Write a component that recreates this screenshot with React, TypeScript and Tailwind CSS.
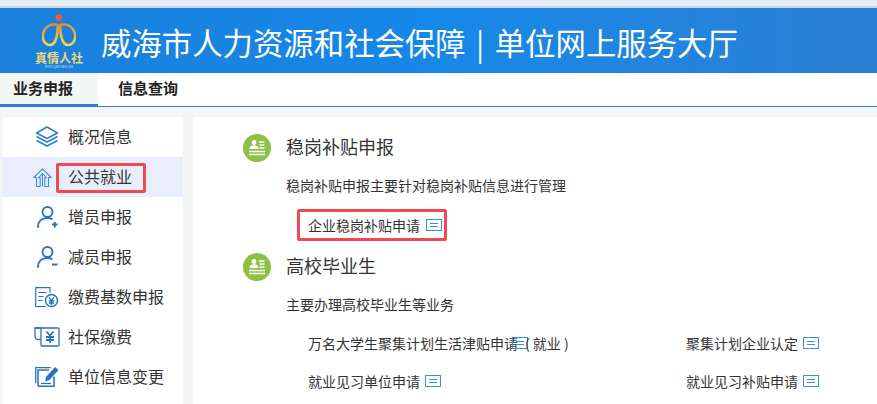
const font = { fontFamily: '"Noto Sans CJK SC", "Liberation Sans", sans-serif' };

function ListIcon() {
  return (
    <svg width="16" height="12" viewBox="0 0 16 12" fill="none" stroke="#3f8fd2" strokeWidth="1" className="shrink-0">
      <rect x="0.5" y="0.5" width="15" height="11" />
      <path d="M4 4.500h8M4 7.500h8" />
    </svg>
  );
}

function GreenBadge() {
  return (
    <svg width="28" height="28" viewBox="0 0 28 28" className="shrink-0">
      <circle cx="14" cy="14" r="14" fill="#8dc045" />
      <circle cx="11" cy="8.500" r="2.400" fill="#fff" />
      <path d="M6.500 15c0-2.800 1.800-3.800 4.500-3.800s4.500 1 4.500 3.800z" fill="#fff" />
      <path d="M16 8h5.500M16.500 11h5M16.500 14h5M6 17.500h16M6 20.500h16" stroke="#fff" strokeWidth="1.500" />
    </svg>
  );
}

function Layers() {
  return (
    <svg width="24" height="21" viewBox="0 0 24 21" fill="none" stroke="#2f80c8" strokeWidth="1.700" strokeLinejoin="round" className="mr-[1px] -mt-[1px]">
      <path d="M12 1 22.500 7 12 12.500 1.500 7z" />
      <path d="M1.500 10.500 12 16l10.500-5.500" />
      <path d="M1.500 14.500 12 20l10.500-5.500" />
    </svg>
  );
}

function House() {
  return (
    <svg width="19" height="19" viewBox="0 0 19 19" fill="none" stroke="#3f8fd2" strokeWidth="1.100" strokeLinejoin="round" className="mr-[10px]">
      <path d="M3.500 18.500V9.500H.8L9.500.8l8.700 8.700h-2.700v9h-3.700V9.800h1.700L9.500 5.500 5.500 9.800h1.700v8.700z" />
      <path d="M9.500 5.500v13" />
    </svg>
  );
}

function Person({ plus }: { plus: boolean }) {
  return (
    <svg width="21" height="22" viewBox="0 0 21 22" fill="none" stroke="#2773bd" strokeWidth="1.900" strokeLinecap="round">
      <circle cx="10.500" cy="6" r="5" />
      <path d="M1 21c0-5.500 3.500-9 9.500-9 1.500 0 3 .3 4.200.9" />
      <path d="M15 18.500h5.500" strokeWidth="2" strokeLinecap="butt" />
      {plus ? <path d="M17.800 16v5.500" strokeWidth="2" strokeLinecap="butt" /> : null}
    </svg>
  );
}

function Fee() {
  return (
    <svg width="24" height="21" viewBox="0 0 24 21" fill="none" stroke="#2773bd" strokeWidth="1.200">
      <path d="M11 19.500H.7V.7H15v5" />
      <path d="M3.500 5.500h8M3.500 9.500h5M3.500 13.500h4" />
      <circle cx="16.500" cy="13.500" r="6" strokeWidth="1.500" />
      <path d="M14 10.500l2.500 3.200 2.500-3.200M13.800 14h5.400M13.800 16h5.400M16.500 13.500v4.500" strokeWidth="1.300" />
    </svg>
  );
}

function Pay() {
  return (
    <svg width="26" height="20" viewBox="0 0 26 20" fill="none" stroke="#2773bd" strokeWidth="1.300">
      <path d="M7 12.500H3.500C2 12.500 1 11 1 9V1h6" />
      <path d="M1 1h23c.7 0 1 .4 1 1v16c0 .6-.3 1-1 1H8c-.7 0-1-.4-1-1V1" />
      <path d="M12.500 4.500l3.500 4 3.500-4M12 10h8M12 13h8M16 8.500v7.500" strokeWidth="1.800" />
    </svg>
  );
}

function Edit() {
  return (
    <svg width="24" height="20" viewBox="0 0 24 20" fill="none" stroke="#2773bd" strokeWidth="1.300">
      <path d="M.7 16V.7h15" />
      <path d="M3 19.300V3h11M19 9.500v9.800H3" strokeWidth="1.500" />
      <path d="M20 0l3.500 3-9 10-4.500 1.500 1-4.500z" fill="#2773bd" stroke="none" />
      <path d="M6 16.500h10" strokeWidth="1.200" />
    </svg>
  );
}

function Logo() {
  const leaf = 'M15.500 11C8 8 .5 15 .8 23c.2 5 4 8.500 8 8 5-1 7.500-11 6.700-20z';
  return (
    <div className="flex flex-col items-center w-[50px] ml-[34px] pt-[6px]">
      <svg width="34" height="34" viewBox="0 0 34 34" fill="none" className="shrink-0">
        <defs>
          <linearGradient id="g" gradientUnits="userSpaceOnUse" x1="0" y1="8" x2="0" y2="32">
            <stop offset="0" stopColor="#e5862c" />
            <stop offset="1" stopColor="#f6dd48" />
          </linearGradient>
        </defs>
        <circle cx="16.800" cy="3.500" r="3.300" fill="#ee5b2c" />
        <path d={leaf} stroke="url(#g)" strokeWidth="2.600" />
        <path d={leaf} stroke="url(#g)" strokeWidth="2.600" transform="matrix(-1 0 0 1 34 0)" />
      </svg>
      <span className="text-[12px] leading-[14px] font-bold text-[#f2d873] mt-[3px] whitespace-nowrap">真情人社</span>
      <span className="text-[3px] leading-[5px] text-[#d9e6c0] whitespace-nowrap">ZHEN QING REN SHE</span>
    </div>
  );
}

const menu = [
  { label: '概况信息', icon: <Layers /> },
  { label: '公共就业', icon: <House />, active: true },
  { label: '增员申报', icon: <Person plus /> },
  { label: '减员申报', icon: <Person plus={false} /> },
  { label: '缴费基数申报', icon: <Fee /> },
  { label: '社保缴费', icon: <Pay /> },
  { label: '单位信息变更', icon: <Edit /> },
];

function Section({ title, desc, children }: { title: string; desc: string; children: React.ReactNode }) {
  return (
    <section>
      <div className="flex items-center h-[28px] ml-[50px]">
        <GreenBadge />
        <h2 className="ml-[15px] -mt-[4px] text-[18px] text-[#333]">{title}</h2>
      </div>
      <p className="ml-[93px] mt-[12px] h-[22px] leading-[22px] text-[14px] text-[#333]">{desc}</p>
      {children}
    </section>
  );
}

export default function App() {
  return (
    <div style={font} className="w-[877px] h-[404px] overflow-hidden bg-[#f4f5f5] flex flex-col">
      <div className="h-[8px] shrink-0 bg-[#e6edf7] border-b-2 border-[#c9d6e8]" />
      <header className="h-[65px] shrink-0 flex bg-gradient-to-r from-[#1a80dc] via-[#1688e8] to-[#2a80d4]">
        <Logo />
        <h1 className="ml-[17px] h-[65px] leading-[68px] text-[30.4px] text-white whitespace-nowrap flex">
          <span>威海市人力资源和社会保障</span>
          <span className="w-[29px] text-center">|</span>
          <span>单位网上服务大厅</span>
        </h1>
      </header>
      <nav className="h-[34px] shrink-0 flex bg-white border-b border-[#2a80d8]">
        <div className="w-[98px] bg-[#f4f5f5] border-b-[3px] border-[#2a80d8] pl-[13px] leading-[30px] text-[15px] font-bold text-[#222] -mb-px h-[34px]">业务申报</div>
        <div className="ml-[20px] leading-[30px] text-[15px] font-bold text-[#222]">信息查询</div>
      </nav>
      <div className="flex mt-[10px] flex-1 min-h-0 pl-[3px]">
        <aside className="w-[180px] shrink-0 bg-white">
          {menu.map((m) => (
            <div key={m.label} className={`h-[40px] flex items-center ${m.active ? 'bg-[#e8eefc]' : ''}`}>
              <div className="w-[65px] pl-[29px] shrink-0">
                <div className="w-[30px] flex justify-center">{m.icon}</div>
              </div>
              <span className="text-[16px] leading-[36px] -mt-[3px] text-[#333] whitespace-nowrap">{m.label}</span>
            </div>
          ))}
        </aside>
        <main className="ml-[10px] flex-1 bg-white pt-[17px] relative">
          <Section title="稳岗补贴申报" desc="稳岗补贴申报主要针对稳岗补贴信息进行管理">
            <div className="ml-[115px] mt-[13px] h-[32px] flex items-center gap-[6px] text-[14px] text-[#333]">
              企业稳岗补贴申请 <ListIcon />
            </div>
          </Section>
          <div className="mt-[12px]">
            <Section title="高校毕业生" desc="主要办理高校毕业生等业务">
              <div className="ml-[115px] mt-[17px] grid grid-cols-[378px_1fr] gap-y-[16px] text-[14px] text-[#333]">
                <div className="h-[22px] flex items-center whitespace-nowrap">
                  万名大学生聚集计划生活津贴申请
                  <span className="-ml-[6px]"><ListIcon /></span>
                  <span className="-ml-[3px] whitespace-pre">( 就业 )</span>
                </div>
                <div className="h-[22px] flex items-center gap-[5px]">聚集计划企业认定 <ListIcon /></div>
                <div className="h-[22px] flex items-center gap-[5px]">就业见习单位申请 <ListIcon /></div>
                <div className="h-[22px] flex items-center gap-[5px]">就业见习补贴申请 <ListIcon /></div>
              </div>
            </Section>
          </div>
          <div className="absolute left-[104px] top-[92px] w-[150px] h-[32px] border-[3px] border-[#ef4a50] rounded-[2px]" />
        </main>
        <div className="absolute left-[56px] top-[163px] w-[90px] h-[30px] border-[3px] border-[#ef4a50] rounded-[2px]" />
      </div>
    </div>
  );
}
